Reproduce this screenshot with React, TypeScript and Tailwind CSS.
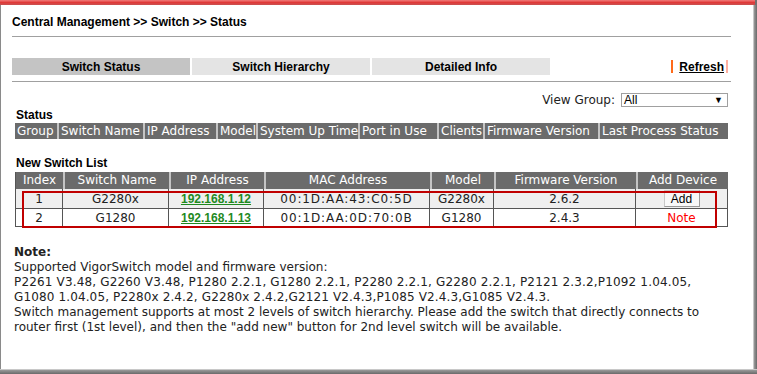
import React from "react";

const verd = { fontFamily: '"DejaVu Sans", Verdana, sans-serif' };
const arial = { fontFamily: '"Liberation Sans", Arial, sans-serif' };

const statusCols = [
  ["Group", 42],
  ["Switch Name", 86],
  ["IP Address", 73],
  ["Model", 40],
  ["System Up Time", 102],
  ["Port in Use", 79],
  ["Clients", 46],
  ["Firmware Version", 115],
  ["Last Process Status", 130],
] as const;

const listCols = [
  ["Index", 48],
  ["Switch Name", 106],
  ["IP Address", 95],
  ["MAC Address", 166],
  ["Model", 64],
  ["Firmware Version", 142],
  ["Add Device", 92],
] as const;

const rows = [
  { idx: "1", name: "G2280x", ip: "192.168.1.12", mac: "00:1D:AA:43:C0:5D", model: "G2280x", fw: "2.6.2", add: true },
  { idx: "2", name: "G1280", ip: "192.168.1.13", mac: "00:1D:AA:0D:70:0B", model: "G1280", fw: "2.4.3", add: false },
];

export default function App() {
  return (
    <div className="w-[757px] h-[374px] bg-white overflow-hidden flex flex-col">
      <div className="flex h-[5px]">
        <div className="w-[755px] bg-gradient-to-b from-[#f07a7a] via-[#e03838] to-[#c85050]" />
        <div className="flex-1 bg-[#707070]" />
      </div>
      <div className="flex flex-1">
        <div className="w-[1px] bg-[#8a8a8a]" />
        <div className="flex-1 flex flex-col pl-[11px]">
          <div className="w-[719px] flex flex-col">
            <div className="mt-[10px] h-[14px] leading-[14px] text-[12px] font-bold text-black" style={arial}>
              Central Management &gt;&gt; Switch &gt;&gt; Status
            </div>
            <div className="mt-[7px] h-[1px] bg-[#a0a0a0]" />
            <div className="mt-[21px] h-[17px] flex items-stretch gap-[2px] text-[12px] font-bold text-black" style={arial}>
              <div className="w-[178px] bg-[#c4c4c4] flex items-center justify-center">Switch Status</div>
              <div className="w-[178px] bg-[#e4e4e4] flex items-center justify-center">Switch Hierarchy</div>
              <div className="w-[178px] bg-[#e4e4e4] flex items-center justify-center">Detailed Info</div>
              <div className="flex-1 flex items-center justify-end pr-[3px]">
                <span className="w-[2px] h-[13px] bg-[#ff6a1a] mr-[6px]" />
                <span className="underline">Refresh</span>
                <span className="w-[2px] h-[13px] bg-[#ffb0a0] ml-[2px]" />
              </div>
            </div>
            <div className="mt-[6px] h-[1px] bg-[#a0a0a0]" />
            <div className="mt-[11px] h-[14px] flex items-center justify-end pr-[3px]">
              <span className="text-[12px] text-[#222] mr-[6px]" style={verd}>View Group:</span>
              <div className="w-[107px] h-[14px] border border-[#a0a0a0] flex items-center justify-between pl-[2px] pr-[4px] text-[12px] leading-[12px] text-black" style={arial}>
                <span>All</span>
                <span className="text-[9px]">▼</span>
              </div>
            </div>
            <div className="mt-[1px] ml-[4px] h-[14px] leading-[14px] text-[12px] font-bold text-black" style={arial}>Status</div>
            <div className="mt-[1px] ml-[3px] w-[713px] h-[16px] flex bg-[#6b6b6b] text-white text-[12px] leading-[16px]" style={verd}>
              {statusCols.map(([t, w], i) => (
                <div
                  key={t}
                  className={`pl-[2px] whitespace-nowrap ${i > 0 ? "border-l-2 border-[#c4c4c4] pl-[1px]" : ""}`}
                  style={{ width: w }}
                >
                  {t}
                </div>
              ))}
            </div>
            <div className="mt-[17px] ml-[4px] h-[14px] leading-[14px] text-[12px] font-bold text-black" style={arial}>New Switch List</div>
            <div className="mt-[2px] ml-[3px] w-[713px] relative text-[12px]" style={verd}>
              <div className="flex h-[17px] bg-[#6b6b6b] text-white leading-[17px] border-l border-[#555]">
                {listCols.map(([t, w], i) => (
                  <div
                    key={t}
                    className={`text-center whitespace-nowrap ${i > 0 ? "border-l-2 border-[#c4c4c4]" : ""}`}
                    style={{ width: i === 0 ? w - 1 : w }}
                  >
                    {t}
                  </div>
                ))}
              </div>
              {rows.map((r, ri) => (
                <div
                  key={r.idx}
                  className={`flex border-l border-b border-[#555] ${ri === 0 ? "h-[20px] bg-[#efefef]" : "h-[18px] bg-white"}`}
                >
                  {[r.idx, r.name, r.ip, r.mac, r.model, r.fw, "add"].map((v, ci) => (
                    <div
                      key={ci}
                      className="flex items-center justify-center border-r border-[#555] text-[#222] whitespace-nowrap"
                      style={{ width: ci === 0 ? listCols[ci][1] - 1 : listCols[ci][1] }}
                    >
                      {ci === 2 ? (
                        <span className="font-bold underline text-[#1f8a1f]" style={arial}>{v}</span>
                      ) : ci === 3 ? (
                        <span className="tracking-[0.9px]">{v}</span>
                      ) : ci === 6 ? (
                        r.add ? (
                          <span
                            className="w-[36px] h-[17px] bg-[#f8f8f8] border border-[#c8c8c8] border-b-[#999] border-r-[#999] flex items-center justify-center text-black"
                            style={arial}
                          >
                            Add
                          </span>
                        ) : (
                          <span className="text-[#ff0000]">Note</span>
                        )
                      ) : (
                        v
                      )}
                    </div>
                  ))}
                </div>
              ))}
              <div className="absolute left-[7px] top-[19px] w-[695px] h-[37px] border-2 border-[#c00000]" />
            </div>
            <div className="mt-[18px] ml-[2px] text-[12px] leading-[15px] text-[#222] whitespace-nowrap" style={verd}>
              <div className="font-bold">Note:</div>
              <div>Supported VigorSwitch model and firmware version:</div>
              <div className="tracking-[0.16px]">P2261 V3.48, G2260 V3.48, P1280 2.2.1, G1280 2.2.1, P2280 2.2.1, G2280 2.2.1, P2121 2.3.2,P1092 1.04.05,</div>
              <div className="tracking-[0.13px]">G1080 1.04.05, P2280x 2.4.2, G2280x 2.4.2,G2121 V2.4.3,P1085 V2.4.3,G1085 V2.4.3.</div>
              <div>Switch management supports at most 2 levels of switch hierarchy. Please add the switch that directly connects to</div>
              <div>router first (1st level), and then the "add new" button for 2nd level switch will be available.</div>
            </div>
          </div>
        </div>
        <div className="w-[1px] bg-[#c8c8c8]" />
        <div className="w-[3px] bg-gradient-to-r from-[#9a9a9a] to-[#6a6a6a]" />
      </div>
      <div className="h-[1px] bg-[#c8c8c8]" />
      <div className="h-[4px] bg-gradient-to-b from-[#9a9a9a] to-[#6a6a6a]" />
    </div>
  );
}
